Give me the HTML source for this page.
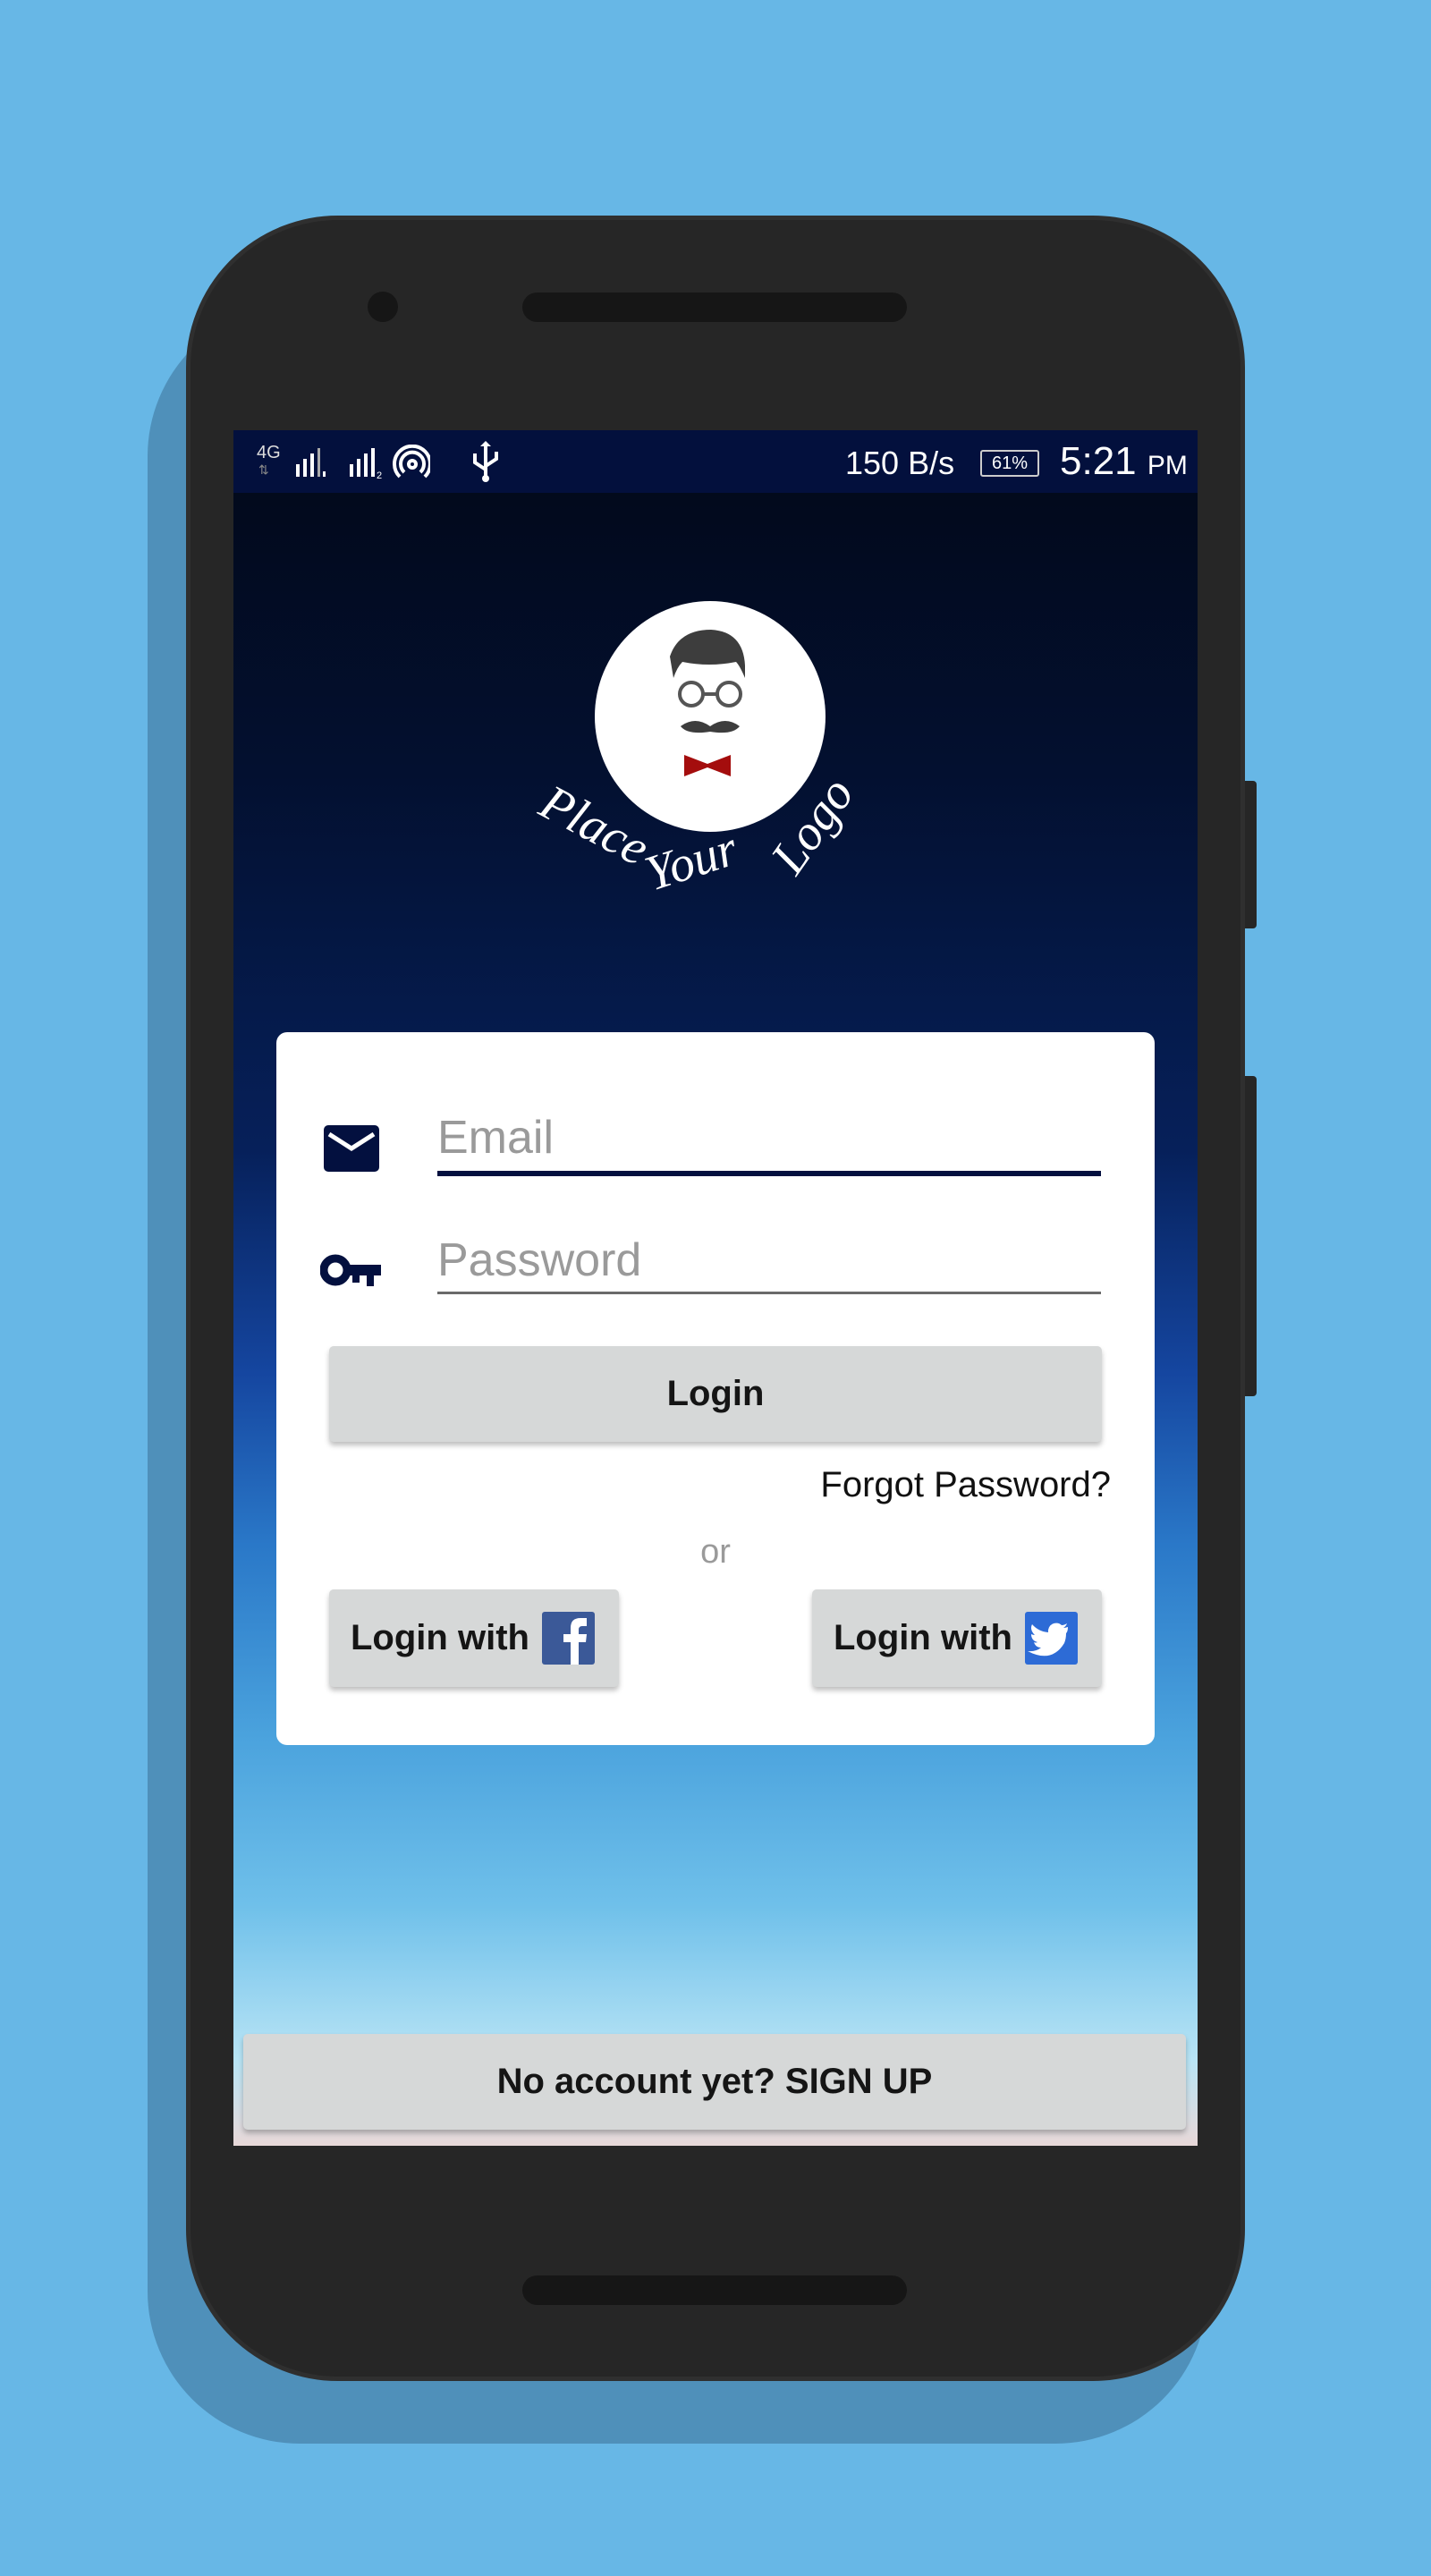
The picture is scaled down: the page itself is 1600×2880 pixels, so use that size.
<!DOCTYPE html>
<html><head><meta charset="utf-8"><style>
*{margin:0;padding:0;box-sizing:border-box}
body{width:1600px;height:2880px;background:#67b7e6;position:relative;overflow:hidden;font-family:"Liberation Sans",sans-serif}
.abs{position:absolute}
.shadow{left:165px;top:340px;width:1185px;height:2392px;border-radius:170px;background:#4f90ba}
.phone{left:208px;top:241px;width:1184px;height:2421px;border-radius:170px;background:#262626;border:5px solid #2f2f2f}
.screen{left:261px;top:481px;width:1078px;height:1918px;overflow:hidden;
background:linear-gradient(180deg,#020818 0%,#031030 20%,#06205a 42%,#1546a0 55%,#2a78c8 65%,#4aa2dd 76%,#6fc0ea 86%,#b8e4f5 95%,#e8d8d8 100%)}
.status{left:0;top:0;width:1078px;height:70px;background:#03103d;color:#fff}
.card{left:48px;top:673px;width:982px;height:797px;background:#fff;border-radius:12px}
.btn{background:#d6d8d8;border-radius:5px;box-shadow:0 4px 6px rgba(0,0,0,.25);color:#151515;font-weight:bold;display:flex;align-items:center;justify-content:center}
</style></head><body>
<div class="abs shadow"></div>
<div class="abs phone"></div>
<div class="abs" style="left:584px;top:327px;width:430px;height:33px;border-radius:17px;background:#161616"></div>
<div class="abs" style="left:411px;top:326px;width:34px;height:34px;border-radius:50%;background:#161616"></div>
<div class="abs" style="left:584px;top:2544px;width:430px;height:33px;border-radius:17px;background:#161616"></div>
<div class="abs" style="left:1392px;top:873px;width:13px;height:165px;background:#262626;border-radius:0 4px 4px 0"></div>
<div class="abs" style="left:1392px;top:1203px;width:13px;height:358px;background:#262626;border-radius:0 4px 4px 0"></div>
<div class="abs screen">
 <div class="abs status">
  <div class="abs" style="left:26px;top:14px;font-size:20px;color:#ddd">4G</div>
  <div class="abs" style="left:28px;top:36px;font-size:14px;color:#888">⇅</div>
  <svg class="abs" style="left:70px;top:16px" width="150" height="40"><g fill="#fff"><rect x="0" y="22" width="4" height="14"/><rect x="8" y="16" width="4" height="20"/><rect x="16" y="10" width="4" height="26"/><rect x="24" y="4" width="3" height="32" fill="#aaa"/><rect x="30" y="30" width="3" height="6"/>
  <rect x="60" y="22" width="4" height="14"/><rect x="68" y="16" width="4" height="20"/><rect x="76" y="10" width="4" height="26"/><rect x="84" y="4" width="4" height="32"/><text x="90" y="38" font-size="11" fill="#fff" font-family="Liberation Sans">2</text></g>
  <g fill="none" stroke="#fff" stroke-width="4"><circle cx="130" cy="22" r="4"/><path d="M121 31a13 13 0 1 1 18 0"/><path d="M116 36a20 20 0 1 1 28 0"/></g></svg>
  <svg class="abs" style="left:262px;top:12px" width="40" height="48"><g stroke="#fff" stroke-width="4" fill="none"><path d="M20 4v38M8 14v10l12 8M32 12v8l-12 8"/></g><circle cx="20" cy="42" r="4" fill="#fff"/><path d="M14 6l6-6 6 6z" fill="#fff"/></svg>
  <div class="abs" style="left:684px;top:16px;font-size:36px">150 B/s</div>
  <div class="abs" style="left:835px;top:22px;width:66px;height:30px;border:2px solid #ccc;border-radius:3px;font-size:20px;text-align:center;line-height:26px">61%</div>
  <div class="abs" style="left:924px;top:10px;font-size:44px">5:21 <span style="font-size:30px">PM</span></div>
 </div>
 <div class="abs" style="left:404px;top:191px;width:258px;height:258px;border-radius:50%;background:#fff"></div>
 <svg class="abs" style="left:404px;top:191px" width="258" height="258">
  <path d="M84 62q10-30 46-30q36 2 38 40v14q-6-14-10-18q-30 6-60 0q-6 6-10 18z" fill="#3d3d3d"/>
  <g fill="none" stroke="#555" stroke-width="4"><circle cx="108" cy="104" r="13"/><circle cx="150" cy="104" r="13"/><path d="M121 104h16"/></g>
  <path d="M96 140q16-12 33 0q17-12 33 0q-8 10-33 6q-25 4-33-6z" fill="#3d3d3d"/>
  <path d="M100 172l26 10 26-10v24l-26-10-26 10z" fill="#a40d0d"/>
 </svg>
 <div class="abs" style="left:340px;top:400px;width:400px;height:150px;font-family:'Liberation Serif',serif;font-style:italic;color:#fff;font-size:56px">
  <span class="abs" style="left:0;top:10px;transform:rotate(28deg)">Place</span>
  <span class="abs" style="left:120px;top:50px;transform:rotate(-18deg)">Your</span>
  <span class="abs" style="left:250px;top:10px;transform:rotate(-55deg)">Logo</span>
 </div>
 <div class="abs card">
  <svg class="abs" style="left:53px;top:104px" width="62" height="52"><rect width="62" height="52" rx="5" fill="#03103f"/><path d="M6 10l25 16 25-16" stroke="#fff" stroke-width="5" fill="none"/></svg>
  <div class="abs" style="left:180px;top:88px;font-size:52px;color:#9a9a9a">Email</div>
  <div class="abs" style="left:180px;top:155px;width:742px;height:6px;background:#03103f"></div>
  <svg class="abs" style="left:49px;top:248px" width="70" height="37"><circle cx="17" cy="18" r="13" fill="none" stroke="#03103f" stroke-width="9"/><path d="M28 12h40v12h-8v12h-8v-12h-8v8h-8v-8h-8z" fill="#03103f"/></svg>
  <div class="abs" style="left:180px;top:225px;font-size:52px;color:#9a9a9a">Password</div>
  <div class="abs" style="left:180px;top:290px;width:742px;height:3px;background:#6a6a6a"></div>
  <div class="abs btn" style="left:59px;top:351px;width:864px;height:107px;font-size:40px">Login</div>
  <div class="abs" style="right:49px;top:484px;font-size:40px;color:#111">Forgot Password?</div>
  <div class="abs" style="left:0;width:982px;text-align:center;top:560px;font-size:38px;color:#9a9a9a">or</div>
  <div class="abs btn" style="left:59px;top:623px;width:324px;height:109px;font-size:40px;justify-content:flex-start;padding-left:24px">Login with
   <svg style="margin-left:14px" width="59" height="59"><rect width="59" height="59" rx="3" fill="#3b5998"/><path d="M32 59V34h-8v-9h8v-7q0-11 11-11h7v9h-5q-4 0-4 4v5h9l-1 9h-8v25z" fill="#fff"/></svg></div>
  <div class="abs btn" style="left:599px;top:623px;width:324px;height:109px;font-size:40px;justify-content:flex-start;padding-left:24px">Login with
   <svg style="margin-left:14px" width="59" height="59"><rect width="59" height="59" rx="3" fill="#2d6bd6"/><path d="M48 17q-3 1-5 1 3-2 4-5-3 2-6 2a9 9 0 0 0-15 8q-11-1-18-9-3 6 3 12-2 0-4-1 0 7 7 9-2 1-4 0 2 6 8 6-6 5-15 4 27 14 41-9 2-5 2-11 2-2 2-7z" fill="#fff"/></svg></div>
 </div>
 <div class="abs btn" style="left:11px;top:1793px;width:1054px;height:107px;font-size:40px">No account yet? SIGN UP</div>
</div>
</body></html>
